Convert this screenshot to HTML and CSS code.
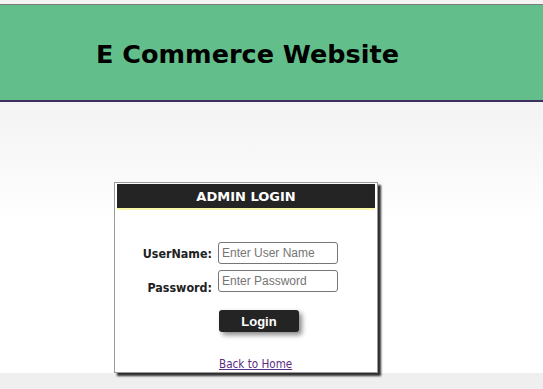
FILE: index.html
```html
<!DOCTYPE html>
<html>
<head>
<meta charset="utf-8">
<title>E Commerce Website</title>
<link rel="stylesheet" href="styles.css">
</head>
<body>
<div class="topstrip"></div>
<header class="site-header">
  <h1 class="site-title">E Commerce Website</h1>
</header>
<main class="content">
  <section class="login-box">
    <h2 class="login-title">ADMIN LOGIN</h2>
    <form class="login-form">
      <label class="field-label" for="user">UserName:</label>
      <input class="field-input" id="user" type="text" placeholder="Enter User Name">
      <label class="field-label field-label--low" for="pass">Password:</label>
      <input class="field-input" id="pass" type="password" placeholder="Enter Password">
      <span></span>
      <button class="login-btn" type="button">Login</button>
    </form>
    <div class="back-row"><a class="back-link" href="#">Back to Home</a></div>
  </section>
</main>
</body>
</html>
```

FILE: styles.css
```css
html, body {
  margin: 0;
  padding: 0;
}
body {
  background: #efefef;
  font-family: "DejaVu Sans", Verdana, sans-serif;
  height: 389px;
  overflow: hidden;
}
.topstrip {
  height: 4px;
  background: #f4f4f4;
}
.site-header {
  background: #62bf8b;
  border-top: 1px solid #7c7c7c;
  border-bottom: 2px solid #3c2f5e;
  height: 98px;
  display: flex;
  align-items: center;
  padding-left: 96px;
  box-sizing: border-box;
}
.site-title {
  margin: 0;
  font-size: 25.5px;
  font-weight: bold;
  color: #000;
  position: relative;
  top: 1px;
}
.content {
  height: 271px;
  background: linear-gradient(#f3f3f3, #ffffff 45%, #ffffff);
  padding-top: 80px;
  box-sizing: border-box;
}
.login-box {
  margin-left: 114px;
  width: 264px;
  height: 191px;
  box-sizing: border-box;
  border: 1px solid #9a9a9a;
  padding: 1px 2px 2px 2px;
  background: #fff;
  box-shadow: 3px 3px 2px #2e2e2e;
}
.login-title {
  margin: 0;
  background: #242424;
  color: #fff;
  font-size: 13px;
  font-weight: bold;
  text-align: center;
  height: 24px;
  line-height: 25px;
  border-bottom: 2px solid #f8f8a8;
}
.login-form {
  display: grid;
  grid-template-columns: 95px 120px;
  column-gap: 6px;
  row-gap: 6px;
  margin-top: 32px;
  align-items: center;
}
.field-label {
  justify-self: end;
  font-family: "DejaVu Sans Condensed", "DejaVu Sans", sans-serif;
  font-stretch: condensed;
  font-size: 12.4px;
  font-weight: bold;
  color: #222;
}
.field-label--low {
  align-self: end;
  margin-bottom: -3px;
}
.field-input {
  width: 120px;
  height: 22px;
  box-sizing: border-box;
  border: 1px solid #767676;
  border-radius: 3px;
  padding: 1px 3px;
  font-family: "Liberation Sans", Arial, sans-serif;
  font-size: 12px;
  background: #fff;
}
.field-input::placeholder {
  color: #757575;
}
.login-btn {
  margin-top: 12px;
  margin-left: 1px;
  width: 80px;
  height: 22px;
  background: #242424;
  color: #fff;
  border: none;
  border-radius: 3px;
  font-family: "Liberation Sans", Arial, sans-serif;
  font-size: 13px;
  font-weight: bold;
  box-shadow: 3px 3px 5px #8a8a8a;
  padding: 0;
}
.back-row {
  margin-top: 21px;
  padding-left: 102px;
}
.back-link {
  font-family: "DejaVu Sans Condensed", "DejaVu Sans", sans-serif;
  font-stretch: condensed;
  font-size: 11.6px;
  color: #5a2d82;
}
```
